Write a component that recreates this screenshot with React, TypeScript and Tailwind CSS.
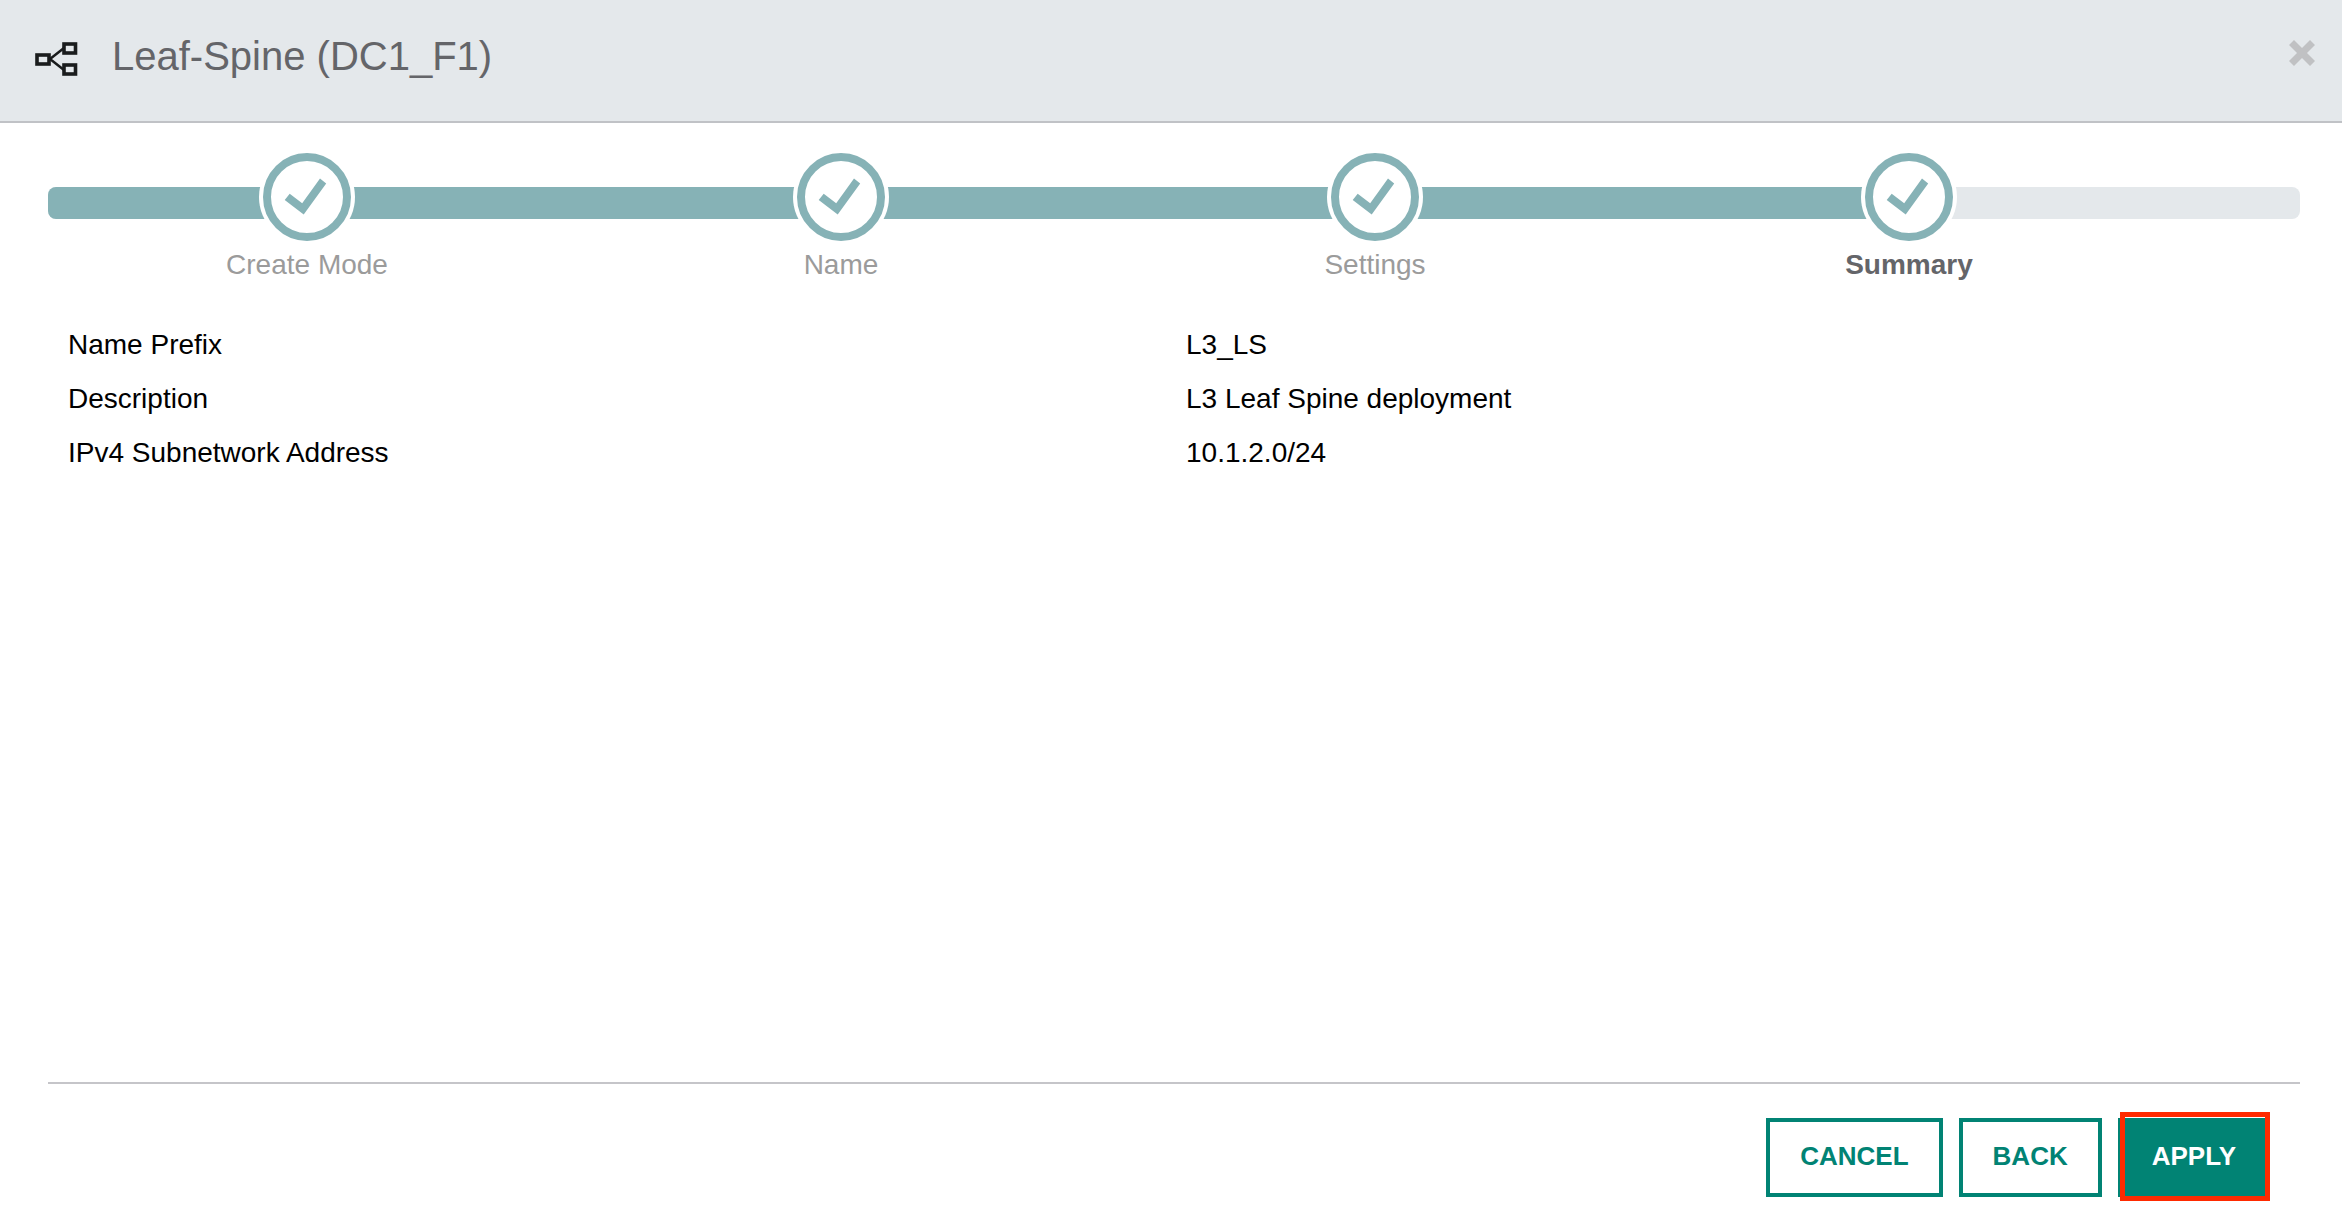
const steps = ["Create Mode", "Name", "Settings", "Summary"];

const summary = [
  { label: "Name Prefix", value: "L3_LS" },
  { label: "Description", value: "L3 Leaf Spine deployment" },
  { label: "IPv4 Subnetwork Address", value: "10.1.2.0/24" },
];

function TopologyIcon() {
  return (
    <svg width="44" height="38" viewBox="0 0 44 38" fill="none" stroke="#1a1c1d" aria-hidden="true">
      <path d="M16 19 30 8M16 19 30 30" strokeWidth="2.5" />
      <rect x="3" y="15" width="12" height="9" strokeWidth="3.6" fill="#e4e8eb" />
      <rect x="30" y="4" width="11.5" height="9" strokeWidth="3.6" fill="#e4e8eb" />
      <rect x="30" y="25" width="11.5" height="9" strokeWidth="3.6" fill="#e4e8eb" />
    </svg>
  );
}

function CloseIcon() {
  return (
    <svg width="26" height="26" viewBox="0 0 26 26" fill="#c0c1c3" aria-hidden="true">
      <path d="M5 0 13 8 21 0 26 5 18 13 26 21 21 26 13 18 5 26 0 21 8 13 0 5Z" />
    </svg>
  );
}

function StepMark() {
  return (
    <span className="block rounded-full bg-white p-1">
      <svg width="88" height="88" viewBox="0 0 88 88" aria-hidden="true">
        <circle cx="44" cy="44" r="40" fill="white" stroke="#86b2b6" strokeWidth="8" />
        <path d="M21.7 47 26.7 40.8 39.2 50.3 57 25.6 63.2 30.4 40.7 61.5Z" fill="#86b2b6" />
      </svg>
    </span>
  );
}

function Stepper() {
  return (
    <div className="relative mr-[42px] ml-12">
      <div className="absolute inset-x-0 top-[38px] flex h-8 overflow-hidden rounded-lg bg-[#e4e8eb]">
        <div className="w-[83%] bg-[#86b2b6]" />
      </div>
      <ol className="relative -ml-2 mr-[124px] grid grid-cols-4">
        {steps.map((step, i) => {
          const current = i === steps.length - 1;
          return (
            <li
              key={step}
              aria-current={current ? "step" : undefined}
              className={
                current
                  ? "flex flex-col items-center text-[28px] leading-10 font-bold text-[#646569]"
                  : "flex flex-col items-center text-[28px] leading-10 text-[#9b9b9b]"
              }
            >
              <StepMark />
              <span>{step}</span>
            </li>
          );
        })}
      </ol>
    </div>
  );
}

export default function App() {
  return (
    <div className="flex min-h-screen flex-col bg-white font-['Liberation_Sans',Arial,sans-serif]">
      <header className="flex items-start justify-between border-b-2 border-[#c0c2c6] bg-[#e4e8eb] pt-8 pr-[27px] pb-[41px] pl-[34px]">
        <div className="flex items-center gap-[34px]">
          <div className="pt-[6px]">
            <TopologyIcon />
          </div>
          <h1 className="text-[40px] leading-[48px] text-[#646569]">Leaf-Spine (DC1_F1)</h1>
        </div>
        <button type="button" aria-label="Close" className="pt-2">
          <CloseIcon />
        </button>
      </header>

      <main className="flex-1 pt-[26px]">
        <Stepper />
        <dl className="pt-[33px] pr-[38px] pl-[68px] text-[28px] leading-[54px] text-black">
          {summary.map((row) => (
            <div key={row.label} className="grid grid-cols-2">
              <dt>{row.label}</dt>
              <dd>{row.value}</dd>
            </div>
          ))}
        </dl>
      </main>

      <footer className="mr-[42px] ml-12 flex justify-end gap-4 border-t-2 border-[#c5c5c9] pt-[34px] pr-[30px] pb-[31px] text-[26px] leading-[31px] font-bold">
        <button type="button" className="border-4 border-[#018374] px-[30px] pt-[19px] pb-[21px] text-[#018374]">
          CANCEL
        </button>
        <button type="button" className="border-4 border-[#018374] px-[30px] pt-[19px] pb-[21px] text-[#018374]">
          BACK
        </button>
        <button type="button" className="relative border-4 border-[#018374] bg-[#018374] px-[30px] pt-[19px] pb-[21px] text-white">
          APPLY
          <span className="absolute -top-[10px] -right-1 -bottom-2 -left-[2px] border-[5px] border-[#ff2a00]" />
        </button>
      </footer>
    </div>
  );
}
